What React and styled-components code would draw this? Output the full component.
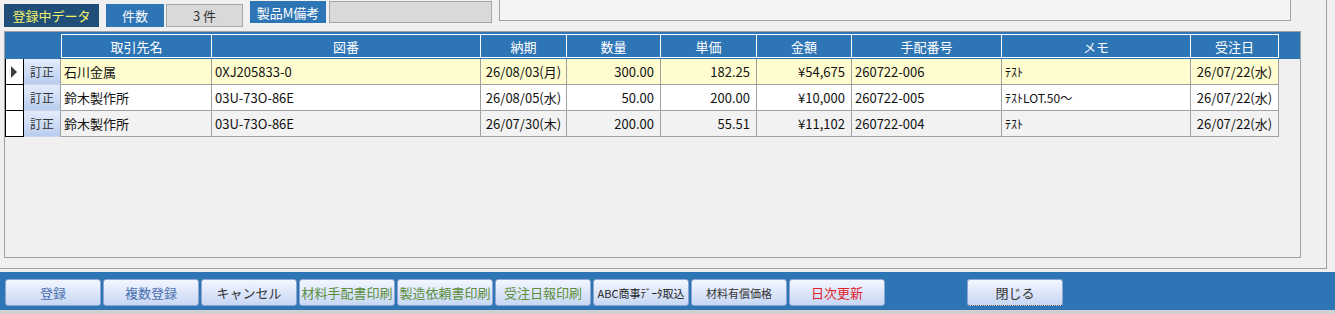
import React from "react";
import styled, { createGlobalStyle } from "styled-components";

const GlobalStyle = createGlobalStyle`
  html, body {
    margin: 0;
    padding: 0;
    background: #f0f0f0;
    font-family: "Noto Sans CJK JP", "Noto Sans", sans-serif;
    font-size: 13px;
    overflow: hidden;
  }
`;

const Screen = styled.div`
  width: 1335px;
  height: 314px;
  display: flex;
  flex-direction: column;
  background: #f0f0f0;
`;

const Panel = styled.div`
  width: 1327px;
  height: 269px;
  box-sizing: border-box;
  border-right: 1px solid #a0a0a0;
  border-bottom: 1px solid #a0a0a0;
  display: flex;
  flex-direction: column;
`;

const TopRow = styled.div`
  height: 31px;
  display: flex;
  align-items: flex-start;
`;

const Label = styled.div`
  box-sizing: border-box;
  height: ${({ $h }) => $h || 23}px;
  width: ${({ $w }) => $w}px;
  margin: ${({ $m }) => $m};
  background: ${({ $dark }) => ($dark ? "#1f4e79" : "#2e75b6")};
  color: ${({ $dark }) => ($dark ? "#f2f26a" : "#ffffff")};
  display: flex;
  align-items: center;
  justify-content: center;
  line-height: 1;
`;

const Field = styled.div`
  box-sizing: border-box;
  height: ${({ $h }) => $h || 23}px;
  width: ${({ $w }) => $w}px;
  margin: ${({ $m }) => $m};
  background: #d9d9d9;
  border: 1px solid #a8a8a8;
  display: flex;
  align-items: center;
  justify-content: center;
  color: #333;
`;

const MemoArea = styled.div`
  box-sizing: border-box;
  width: 792px;
  height: 21px;
  margin-left: 7px;
  background: #f4f4f4;
  border: 1px solid #a0a0a0;
  border-top: none;
`;

const Grid = styled.div`
  box-sizing: border-box;
  margin-left: 4px;
  width: 1297px;
  height: 227px;
  border: 1px solid #a0a0a0;
  background: #f0f0f0;
`;

const cols = "19px 37px 151px 269px 86px 94px 96px 95px 150px 189px 88px";

const HeadBand = styled.div`
  height: 27px;
  background: #2e75b6;
  display: grid;
  grid-template-columns: ${cols};
  align-items: start;
  padding-top: 2px;
  box-sizing: border-box;
`;

const HeadCell = styled.div`
  box-sizing: border-box;
  height: 24px;
  border-top: 1px solid #ffffff;
  border-bottom: 1px solid #ffffff;
  border-right: 1px solid #ffffff;
  border-left: ${({ $first }) => ($first ? "1px solid #ffffff" : "none")};
  color: #ffffff;
  display: flex;
  align-items: center;
  justify-content: center;
`;

const Corner = styled.div`
  grid-column: span 2;
`;

const Row = styled.div`
  display: grid;
  grid-template-columns: ${cols};
  height: 26px;
`;

const Selector = styled.div`
  box-sizing: border-box;
  border-left: 1px solid #000;
  border-right: 1px solid #000;
  border-bottom: 1px solid #000;
  background: #ffffff;
  display: flex;
  align-items: center;
  padding-left: 5px;
`;

const Arrow = styled.div`
  width: 0;
  height: 0;
  border-top: 6px solid transparent;
  border-bottom: 6px solid transparent;
  border-left: 6px solid #404040;
`;

const FixButton = styled.div`
  box-sizing: border-box;
  background: linear-gradient(#e4ecfb, #b9cdf0);
  border-right: 1px solid #a0a0a0;
  border-bottom: 1px solid #c8d4ea;
  color: #333;
  font-size: 12px;
  display: flex;
  align-items: center;
  justify-content: center;
`;

const Cell = styled.div`
  box-sizing: border-box;
  background: ${({ $bg }) => $bg};
  border-right: 1px solid #a0a0a0;
  border-bottom: 1px solid #a0a0a0;
  display: flex;
  align-items: center;
  justify-content: ${({ $align }) =>
    $align === "right" ? "flex-end" : $align === "center" ? "center" : "flex-start"};
  padding: 0 ${({ $align }) => ($align === "right" ? "6px" : "3px")};
  color: #111;
  font-size: ${({ $small }) => ($small ? "12px" : "13px")};
  white-space: nowrap;
  overflow: hidden;
`;

const BottomBar = styled.div`
  margin-top: 3px;
  height: 38px;
  background: #2e75b6;
  display: flex;
  align-items: flex-start;
  padding: 7px 0 0 5px;
  box-sizing: border-box;
  gap: 2px;
`;

const Button = styled.div`
  box-sizing: border-box;
  width: 96px;
  height: 27px;
  margin-left: ${({ $gap }) => $gap || 0}px;
  border: 1px solid #8ea6cf;
  border-radius: 3px;
  background: linear-gradient(#f3f6ff, #c7d7f4);
  color: ${({ $color }) => $color || "#333"};
  font-size: ${({ $small }) => ($small ? "11px" : "13px")};
  display: flex;
  align-items: center;
  justify-content: center;
  white-space: nowrap;
  border-bottom: ${({ $focus }) => ($focus ? "1px dotted #333" : "1px solid #8ea6cf")};
`;

const Footer = styled.div`
  flex: 1;
  background: #d0d0d0;
`;

const headers = ["取引先名", "図番", "納期", "数量", "単価", "金額", "手配番号", "メモ", "受注日"];

const rows = [
  { bg: "#fffdd0", cur: true, v: ["石川金属", "0XJ205833-0", "26/08/03(月)", "300.00", "182.25", "¥54,675", "260722-006", "ﾃｽﾄ", "26/07/22(水)"] },
  { bg: "#ffffff", v: ["鈴木製作所", "03U-73O-86E", "26/08/05(水)", "50.00", "200.00", "¥10,000", "260722-005", "ﾃｽﾄLOT.50～", "26/07/22(水)"] },
  { bg: "#f2f2f2", v: ["鈴木製作所", "03U-73O-86E", "26/07/30(木)", "200.00", "55.51", "¥11,102", "260722-004", "ﾃｽﾄ", "26/07/22(水)"] },
];

const aligns = ["left", "left", "center", "right", "right", "right", "left", "left", "center"];

const buttons = [
  { t: "登録", c: "#4a6fae" },
  { t: "複数登録", c: "#4a6fae" },
  { t: "キャンセル", c: "#333" },
  { t: "材料手配書印刷", c: "#5d8f3c" },
  { t: "製造依頼書印刷", c: "#5d8f3c" },
  { t: "受注日報印刷", c: "#5d8f3c" },
  { t: "ABC商事ﾃﾞｰﾀ取込", c: "#222", small: true },
  { t: "材料有償価格", c: "#333", small: true },
  { t: "日次更新", c: "#e0202a" },
];

export default function App() {
  return (
    <Screen>
      <GlobalStyle />
      <Panel>
        <TopRow>
          <Label $dark $w={95} $m="4px 0 0 4px">登録中データ</Label>
          <Label $w={58} $m="4px 0 0 7px">件数</Label>
          <Field $w={77} $m="4px 0 0 2px">3 件</Field>
          <Label $w={76} $h={22} $m="1px 0 0 7px">製品M備考</Label>
          <Field $w={163} $h={22} $m="1px 0 0 3px" />
          <MemoArea />
        </TopRow>
        <Grid>
          <HeadBand>
            <Corner />
            {headers.map((h, i) => (
              <HeadCell key={h} $first={i === 0}>{h}</HeadCell>
            ))}
          </HeadBand>
          {rows.map((r, ri) => (
            <Row key={ri}>
              <Selector>{r.cur && <Arrow />}</Selector>
              <FixButton>訂正</FixButton>
              {r.v.map((v, i) => (
                <Cell key={i} $bg={r.bg} $align={aligns[i]} $small={i === 7}>{v}</Cell>
              ))}
            </Row>
          ))}
        </Grid>
      </Panel>
      <BottomBar>
        {buttons.map((b) => (
          <Button key={b.t} $color={b.c} $small={b.small}>{b.t}</Button>
        ))}
        <Button $gap={80} $focus>閉じる</Button>
      </BottomBar>
      <Footer />
    </Screen>
  );
}
